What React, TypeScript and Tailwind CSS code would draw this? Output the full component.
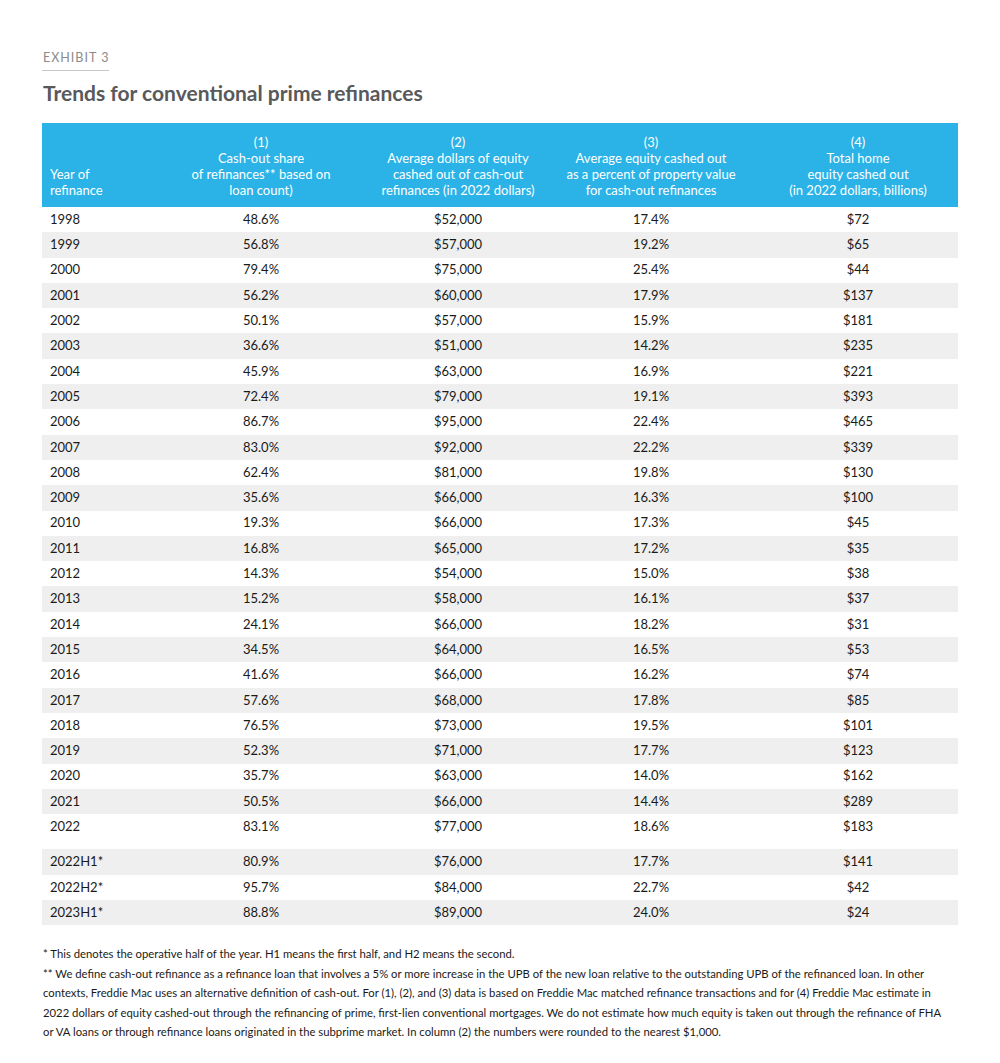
type Row = [string, string, string, string, string];

const rows: Row[] = [
  ["1998", "48.6%", "$52,000", "17.4%", "$72"],
  ["1999", "56.8%", "$57,000", "19.2%", "$65"],
  ["2000", "79.4%", "$75,000", "25.4%", "$44"],
  ["2001", "56.2%", "$60,000", "17.9%", "$137"],
  ["2002", "50.1%", "$57,000", "15.9%", "$181"],
  ["2003", "36.6%", "$51,000", "14.2%", "$235"],
  ["2004", "45.9%", "$63,000", "16.9%", "$221"],
  ["2005", "72.4%", "$79,000", "19.1%", "$393"],
  ["2006", "86.7%", "$95,000", "22.4%", "$465"],
  ["2007", "83.0%", "$92,000", "22.2%", "$339"],
  ["2008", "62.4%", "$81,000", "19.8%", "$130"],
  ["2009", "35.6%", "$66,000", "16.3%", "$100"],
  ["2010", "19.3%", "$66,000", "17.3%", "$45"],
  ["2011", "16.8%", "$65,000", "17.2%", "$35"],
  ["2012", "14.3%", "$54,000", "15.0%", "$38"],
  ["2013", "15.2%", "$58,000", "16.1%", "$37"],
  ["2014", "24.1%", "$66,000", "18.2%", "$31"],
  ["2015", "34.5%", "$64,000", "16.5%", "$53"],
  ["2016", "41.6%", "$66,000", "16.2%", "$74"],
  ["2017", "57.6%", "$68,000", "17.8%", "$85"],
  ["2018", "76.5%", "$73,000", "19.5%", "$101"],
  ["2019", "52.3%", "$71,000", "17.7%", "$123"],
  ["2020", "35.7%", "$63,000", "14.0%", "$162"],
  ["2021", "50.5%", "$66,000", "14.4%", "$289"],
  ["2022", "83.1%", "$77,000", "18.6%", "$183"],
];

const halves: Row[] = [
  ["2022H1*", "80.9%", "$76,000", "17.7%", "$141"],
  ["2022H2*", "95.7%", "$84,000", "22.7%", "$42"],
  ["2023H1*", "88.8%", "$89,000", "24.0%", "$24"],
];

const cols = "grid grid-cols-[108px_222px_172px_214px_200px]";

function DataRow({ row, shaded }: { row: Row; shaded: boolean }) {
  return (
    <div className={`${cols} h-[25.3px] items-center ${shaded ? "bg-[#efefef]" : ""}`}>
      <div className="pl-2">{row[0]}</div>
      <div className="text-center">{row[1]}</div>
      <div className="text-center">{row[2]}</div>
      <div className="text-center">{row[3]}</div>
      <div className="text-center">{row[4]}</div>
    </div>
  );
}

export default function App() {
  return (
    <div className="w-[1000px] h-[1063px] bg-white pl-[42px] pt-[44px] font-['Lato',sans-serif] text-[#1a1a1a]">
      <div className="inline-block text-[12.5px] tracking-[0.08em] text-[#8a8a8a] leading-[14px] pb-[5px] border-b border-[#c8c8c8] pl-[1px]">
        EXHIBIT 3
      </div>
      <h1 className="mt-[9px] text-[21px] font-bold text-[#58595b] leading-[26px] pl-[1px]">
        Trends for conventional prime refinances
      </h1>

      <div className="mt-[17px] w-[916px] text-[13px]">
        <div className={`${cols} h-[84px] bg-[#2bb2e6] text-white leading-[16px] items-end pb-[9px]`}>
          <div className="pl-2">
            Year of
            <br />
            refinance
          </div>
          <div className="text-center">
            (1)
            <br />
            Cash-out share
            <br />
            of refinances** based on
            <br />
            loan count)
          </div>
          <div className="text-center">
            (2)
            <br />
            Average dollars of equity
            <br />
            cashed out of cash-out
            <br />
            refinances (in 2022 dollars)
          </div>
          <div className="text-center">
            (3)
            <br />
            Average equity cashed out
            <br />
            as a percent of property value
            <br />
            for cash-out refinances
          </div>
          <div className="text-center">
            (4)
            <br />
            Total home
            <br />
            equity cashed out
            <br />
            (in 2022 dollars, billions)
          </div>
        </div>

        {rows.map((r, i) => (
          <DataRow key={r[0]} row={r} shaded={i % 2 === 1} />
        ))}

        <div className="mt-[10px]">
          {halves.map((r, i) => (
            <DataRow key={r[0]} row={r} shaded={i % 2 === 0} />
          ))}
        </div>
      </div>

      <div className="mt-[19px] w-[920px] text-[11.3px] leading-[19.5px] pl-[1px]">
        <p>* This denotes the operative half of the year. H1 means the first half, and H2 means the second.</p>
        <p>
          <span className="block whitespace-nowrap">
            ** We define cash-out refinance as a refinance loan that involves a 5% or more increase in the UPB of the new loan relative to the outstanding UPB of the refinanced loan. In other
          </span>
          <span className="block whitespace-nowrap">
            contexts, Freddie Mac uses an alternative definition of cash-out. For (1), (2), and (3) data is based on Freddie Mac matched refinance transactions and for (4) Freddie Mac estimate in
          </span>
          <span className="block whitespace-nowrap">
            2022 dollars of equity cashed-out through the refinancing of prime, first-lien conventional mortgages. We do not estimate how much equity is taken out through the refinance of FHA
          </span>
          <span className="block whitespace-nowrap">
            or VA loans or through refinance loans originated in the subprime market. In column (2) the numbers were rounded to the nearest $1,000.
          </span>
        </p>
      </div>
    </div>
  );
}
